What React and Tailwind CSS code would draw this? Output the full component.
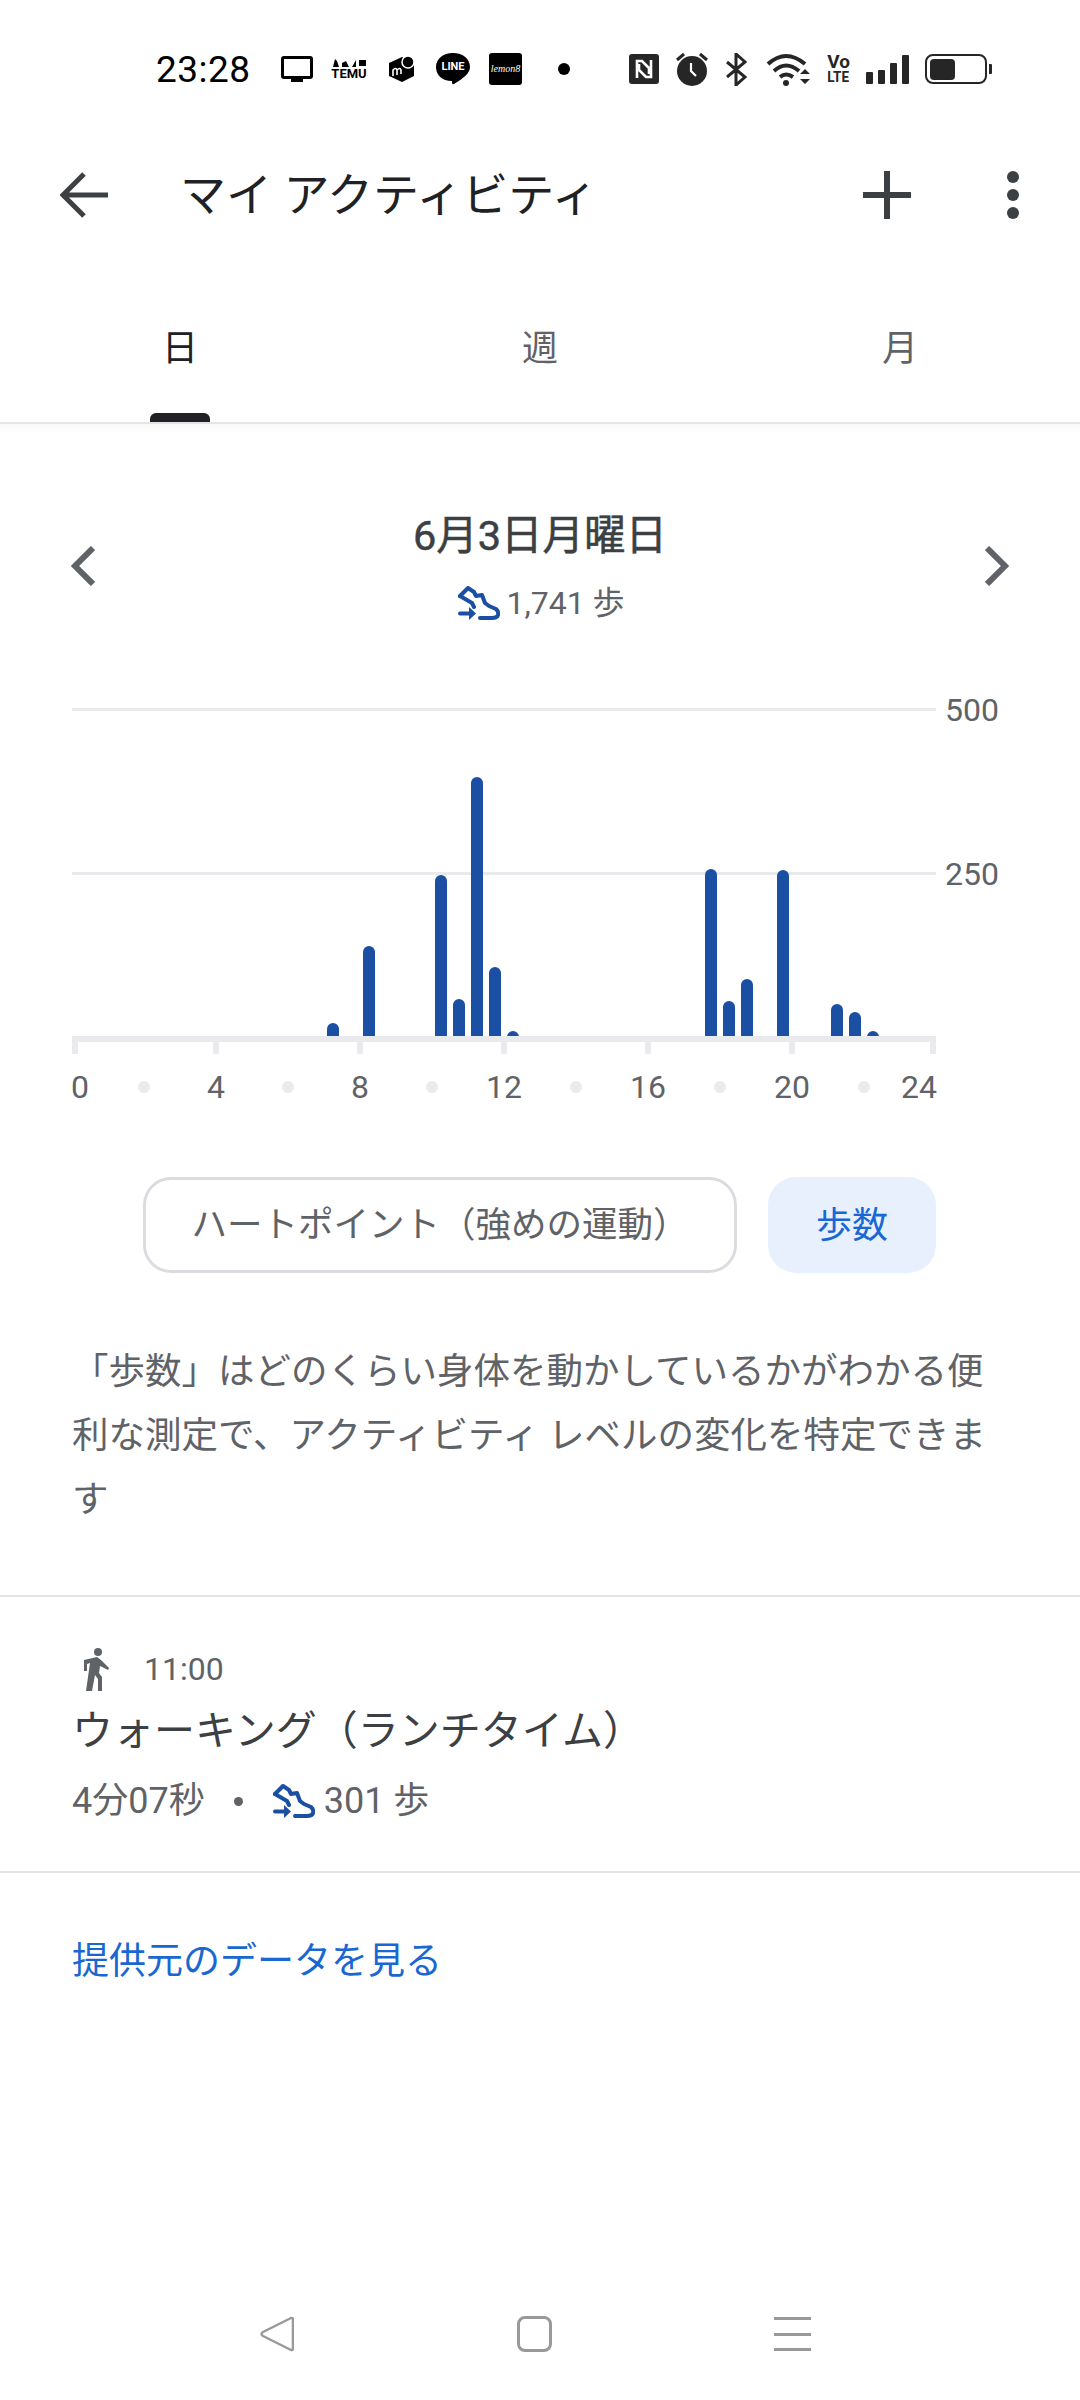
const jp = "font-['Roboto','Noto_Sans_CJK_JP',sans-serif]"

const bars = [
  [327, 1023], [363, 946], [435, 875], [453, 999], [471, 777], [489, 967], [507, 1031],
  [705, 869], [723, 1001], [741, 979], [777, 870], [831, 1004], [849, 1012], [867, 1031],
]
const ticks = [72, 213, 357, 501, 645, 789, 930]
const dots = [144, 288, 432, 576, 720, 864]
const labels = [
  ['0', 71, 'start'], ['4', 216, 'middle'], ['8', 360, 'middle'], ['12', 504, 'middle'],
  ['16', 648, 'middle'], ['20', 792, 'middle'], ['24', 937, 'end'],
]

function ShoeIcon({ className }) {
  return (
    <svg viewBox="0 0 42 34" className={className} fill="none" stroke="#1a4fa3" strokeWidth="4" strokeLinejoin="round" strokeLinecap="round">
      <path d="M2 10 L10 2 L16 6 L18 10 L24 9 L27 17 L31 20 L38 23 Q41 26 40 29 Q39 32 34 32 L22 32" />
      <path d="M2 10 L14 17 L16 21" />
      <path d="M2 27.5 H12" />
      <path d="M11 21 L18 27.5 L11 34 Z" fill="#1a4fa3" stroke="none" />
    </svg>
  )
}

function StatusBar() {
  return (
    <div className="flex items-center h-[133px] pl-[156px] pt-[5px] text-black">
      <span className="font-['Roboto',sans-serif] text-[37px] leading-none w-[125px] tracking-[0.5px]">23:28</span>
      <svg viewBox="0 0 32 26" className="w-[32px] h-[26px]" fill="none">
        <rect x="1.5" y="1.5" width="29" height="20" rx="1.5" stroke="#000" strokeWidth="3" />
        <rect x="10" y="23" width="12" height="3" fill="#000" />
      </svg>
      <div className="ml-[18px] w-[36px] flex flex-col items-center">
        <svg viewBox="0 0 36 8" className="w-[36px] h-[8px]" fill="#000">
          <path d="M2 8 L4 0 L6 2 L8 8 Z M11 8 V4 L15 2 L18 8 Z M21 8 L25 1 V8 Z M28 1 H35 V7 H28 Z" />
        </svg>
        <span className="font-['Roboto',sans-serif] font-bold text-[13px] leading-[12px] mt-[1px]">TEMU</span>
      </div>
      <svg viewBox="0 0 28 26" className="ml-[21px] w-[28px] h-[26px]">
        <path d="M14 1 L26 7 V20 L14 26 L1 20 V7 Z" fill="#000" />
        <circle cx="20" cy="6" r="6" fill="#000" stroke="#fff" strokeWidth="1.5" />
        <path d="M5 20 V14 Q8 11 9 14 V19 M9 14 Q12 11 13 14 V18" stroke="#fff" strokeWidth="1.6" fill="none" />
      </svg>
      <div className="ml-[20px] relative w-[34px] h-[32px]">
        <svg viewBox="0 0 34 32" className="w-[34px] h-[32px]">
          <path d="M17 0 C27 0 34 6 34 14 C34 20 28 25 18 31 C16 32 16 30 16 28 C6 28 0 22 0 14 C0 6 7 0 17 0 Z" fill="#000" />
        </svg>
        <span className="absolute left-0 top-[8px] w-[34px] text-center text-white font-['Roboto',sans-serif] font-bold text-[11px] leading-[12px]">LINE</span>
      </div>
      <div className="ml-[19px] w-[33px] h-[32px] rounded-[3px] bg-black flex items-center justify-center">
        <span className="text-white font-['Liberation_Serif',serif] italic text-[10px] leading-none">lemon8</span>
      </div>
      <div className="ml-[36px] w-[12px] h-[12px] rounded-full bg-black" />
      <svg viewBox="0 0 30 30" className="ml-[59px] w-[30px] h-[30px]">
        <rect width="30" height="30" rx="3" fill="#262626" />
        <path d="M8 24 V7 H13 L20 14 V20 M22 6 V23 H17 L10 16 V10" stroke="#fff" strokeWidth="2.6" fill="none" />
      </svg>
      <svg viewBox="0 0 32 34" className="ml-[17px] w-[32px] h-[34px]">
        <circle cx="16" cy="19" r="15" fill="#262626" />
        <path d="M1 8 L8 2 M31 8 L24 2" stroke="#262626" strokeWidth="3" />
        <path d="M15 11 V19 L20 24" stroke="#fff" strokeWidth="2.2" fill="none" />
      </svg>
      <svg viewBox="0 0 21 33" className="ml-[18px] w-[21px] h-[33px]" fill="none" stroke="#262626" strokeWidth="3">
        <path d="M1 9 L19 24 L10 32 V1 L19 9 L1 24" />
      </svg>
      <svg viewBox="0 0 44 33" className="ml-[19px] w-[44px] h-[33px]">
        <path d="M2 11 Q20 -5 39 11" stroke="#262626" strokeWidth="4" fill="none" />
        <path d="M8 18 Q20 7 33 18" stroke="#262626" strokeWidth="4" fill="none" />
        <path d="M14 24 Q20 19 27 24" stroke="#262626" strokeWidth="4" fill="none" />
        <circle cx="20" cy="30" r="3" fill="#262626" />
        <path d="M34 21 L39 16 L44 21 Z M34 26 H44 L39 31 Z" fill="#262626" />
      </svg>
      <div className="ml-[17px] w-[23px] flex flex-col items-center font-['Roboto',sans-serif] font-bold text-[#262626]">
        <span className="text-[19px] leading-[16px]">Vo</span>
        <span className="text-[15px] leading-[14px] scale-x-90">LTE</span>
      </div>
      <div className="ml-[16px] flex items-end gap-[5px] h-[30px]">
        <div className="w-[7px] h-[12px] rounded-[1px] bg-[#262626]" />
        <div className="w-[7px] h-[14px] rounded-[1px] bg-[#262626]" />
        <div className="w-[7px] h-[21px] rounded-[1px] bg-[#262626]" />
        <div className="w-[7px] h-[29px] rounded-[1px] bg-[#262626]" />
      </div>
      <div className="ml-[16px] flex items-center">
        <div className="w-[62px] h-[30px] rounded-[8px] border-[2.5px] border-[#262626] p-[2.5px]">
          <div className="w-[25px] h-full rounded-[4px] bg-[#262626]" />
        </div>
        <div className="ml-[2px] w-[3px] h-[10px] bg-[#262626] rounded-r-[1px]" />
      </div>
    </div>
  )
}

function Toolbar() {
  return (
    <div className="flex items-center h-[124px] pl-[60px] text-[#3c4043]">
      <svg viewBox="0 0 48 48" className="w-[48px] h-[48px]" fill="none" stroke="#3c4043" strokeWidth="5">
        <path d="M48 24 H4 M24 3 L3 24 L24 45" />
      </svg>
      <h1 className={`${jp} ml-[72px] text-[46px] leading-none font-normal text-[#202124]`}>マイ アクティビティ</h1>
      <svg viewBox="0 0 48 48" className="ml-auto w-[48px] h-[48px]" fill="none" stroke="#3c4043" strokeWidth="6">
        <path d="M24 0 V48 M0 24 H48" />
      </svg>
      <svg viewBox="0 0 14 48" className="ml-[95px] mr-[60px] w-[14px] h-[48px]" fill="#3c4043">
        <circle cx="7" cy="6" r="6" />
        <circle cx="7" cy="24" r="6" />
        <circle cx="7" cy="42" r="6" />
      </svg>
    </div>
  )
}

function Tabs() {
  return (
    <div className="relative">
      <div className={`${jp} flex h-[167px] text-[36px] leading-none border-b-[2px] border-[#e4e4e4] text-[#5f6368]`}>
        <div className="relative w-[360px] flex justify-center pt-[74px] text-[#202124]">
          日
          <div className="absolute bottom-0 left-[150px] w-[60px] h-[9px] rounded-t-[6px] bg-[#202124]" />
        </div>
        <div className="w-[360px] flex justify-center pt-[74px]">週</div>
        <div className="w-[360px] flex justify-center pt-[74px]">月</div>
      </div>
      <div className="h-[8px] bg-gradient-to-b from-[#f8f8f8] to-white" />
    </div>
  )
}

function DateHeader() {
  return (
    <div className="flex items-start justify-between mt-[78px] px-[70px]">
      <svg viewBox="0 0 25 40" className="mt-[36px] w-[25px] h-[40px]" fill="none" stroke="#5f6368" strokeWidth="6">
        <path d="M23 2 L5 20 L23 38" />
      </svg>
      <div className="flex flex-col items-center pt-[6px]">
        <h2 className={`${jp} text-[41.5px] leading-[40px] font-normal [-webkit-text-stroke:0.5px_#3c4043] text-[#3c4043]`}>6月3日月曜日</h2>
        <div className="flex items-center mt-[30px] pl-[3px]">
          <ShoeIcon className="w-[42px] h-[34px]" />
          <span className={`${jp} ml-[6px] text-[32px] leading-none text-[#5f6368]`}>1,741 歩</span>
        </div>
      </div>
      <svg viewBox="0 0 25 40" className="mt-[36px] w-[25px] h-[40px]" fill="none" stroke="#5f6368" strokeWidth="6">
        <path d="M2 2 L20 20 L2 38" />
      </svg>
    </div>
  )
}

function StepsChart() {
  return (
    <svg viewBox="0 680 1080 430" className="block w-[1080px] h-[430px] mt-[60px]">
      <rect x="72" y="708" width="864" height="3" fill="#e8eaed" />
      <rect x="72" y="872" width="864" height="3" fill="#e8eaed" />
      {bars.map(([x, top]) => (
        <path
          key={x}
          d={`M${x} 1037 V${top + 6} a6 6 0 0 1 12 0 V1037 Z`}
          fill="#1a4fa3"
        />
      ))}
      <rect x="72" y="1036" width="864" height="6" fill="#e8eaed" />
      {ticks.map((x) => (
        <rect key={x} x={x} y="1040" width="6" height="14" fill="#e8eaed" />
      ))}
      {dots.map((x) => (
        <circle key={x} cx={x} cy="1087" r="6" fill="#e8eaed" />
      ))}
      <g fontFamily="Roboto, sans-serif" fontSize="32" fill="#5f6368">
        <text x="999" y="721" textAnchor="end">500</text>
        <text x="999" y="885" textAnchor="end">250</text>
        {labels.map(([t, x, anchor]) => (
          <text key={t} x={x} y="1098" textAnchor={anchor}>{t}</text>
        ))}
      </g>
    </svg>
  )
}

function Chips() {
  return (
    <div className={`${jp} flex gap-[31px] mt-[67px] ml-[143px] text-[36px] leading-none`}>
      <div className="flex items-center justify-center w-[594px] h-[96px] pt-[2px] rounded-[28px] border-[3px] border-[#dadce0] text-[35.5px] text-[#5f6368]">
        ハートポイント（強めの運動）
      </div>
      <div className="flex items-center justify-center w-[168px] h-[96px] pt-[2px] rounded-[28px] bg-[#e8f0fe] text-[#1967d2]">
        歩数
      </div>
    </div>
  )
}

function ActivityRow() {
  return (
    <div className="border-t-[2px] border-b-[2px] border-[#e4e4e4] h-[278px] px-[72px] pt-[50px]">
      <div className="flex items-center h-[44px]">
        <svg viewBox="0 0 28 44" className="ml-[10px] mt-[2px] w-[28px] h-[44px]" fill="#5f6368">
          <circle cx="16" cy="4" r="4" />
          <path d="M2 12 L15 9 L19 12 L27 20 L26 22 L18 18 L17 25 L20 29 V43 H16 V31 L13 27 L10 43 H4 L8 15 L5 16 V23 H2 Z" />
        </svg>
        <span className="ml-[34px] font-['Roboto',sans-serif] text-[32px] leading-none text-[#5f6368]">11:00</span>
      </div>
      <div className={`${jp} mt-[20px] text-[41px] leading-[40px] text-[#3c4043]`}>ウォーキング（ランチタイム）</div>
      <div className={`${jp} flex items-center mt-[32px] text-[36px] leading-none text-[#5f6368]`}>
        <span>4分07秒</span>
        <span className="ml-[29px] w-[9px] h-[9px] rounded-full bg-[#5f6368]" />
        <ShoeIcon className="ml-[30px] w-[42px] h-[34px]" />
        <span className="ml-[9px]">301 歩</span>
      </div>
    </div>
  )
}

function NavBar() {
  return (
    <div className="flex items-center justify-between mt-auto h-[132px] pl-[260px] pr-[269px]">
      <svg viewBox="0 0 34 36" className="w-[34px] h-[36px]" fill="none" stroke="#999" strokeWidth="2.5" strokeLinejoin="round">
        <path d="M31 2 Q33 1.5 33 4 V32 Q33 34.5 31 34 L3 20 Q0 18 3 16 Z" />
      </svg>
      <div className="w-[35px] h-[36px] rounded-[8px] border-[3px] border-[#999]" />
      <div className="flex flex-col justify-between w-[37px] h-[36px] py-[1px]">
        <div className="h-[3px] bg-[#999]" />
        <div className="h-[3px] bg-[#999]" />
        <div className="h-[3px] bg-[#999]" />
      </div>
    </div>
  )
}

export default function App() {
  return (
    <div className="flex flex-col w-[1080px] h-[2400px] bg-white overflow-hidden">
      <StatusBar />
      <Toolbar />
      <Tabs />
      <DateHeader />
      <StepsChart />
      <Chips />
      <p className={`${jp} mt-[67px] px-[72px] text-[36.5px] leading-[64px] text-[#5f6368]`}>
        「歩数」はどのくらい身体を動かしているかがわかる便利な測定で、アクティビティ レベルの変化を特定できます
      </p>
      <div className="mt-[63px]">
        <ActivityRow />
      </div>
      <a className={`${jp} mt-[70px] px-[72px] text-[37px] leading-none text-[#1967d2]`}>提供元のデータを見る</a>
      <NavBar />
    </div>
  )
}
